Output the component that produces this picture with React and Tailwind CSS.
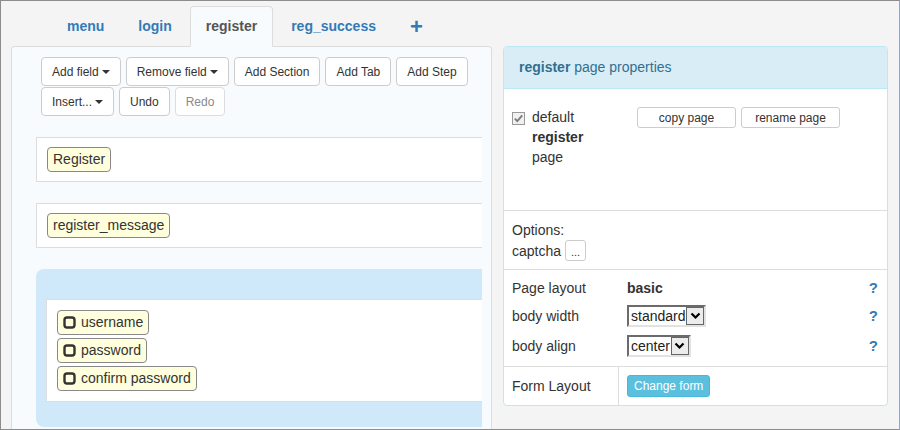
import React from 'react';

const tabs = ['menu', 'login', 'register', 'reg_success'];

const Caret = () => (
    <span className="inline-block w-0 h-0 ml-[3px] align-middle border-x-[4px] border-x-transparent border-t-[4px] border-t-[#333]" />
);

const ToolButton = ({ children, caret, disabled }) => (
    <button
        className={
            'h-[29px] px-[10px] rounded-[4px] border bg-white text-[12px] flex items-center ' +
            (disabled ? 'border-[#ddd] text-[#8a8a8a]' : 'border-[#ccc] text-[#333]')
        }
    >
        {children}
        {caret && <Caret />}
    </button>
);

const FieldIcon = () => (
    <svg width="13" height="13" viewBox="0 0 13 13" className="mr-[5px]">
        <rect x="1.5" y="1.5" width="10" height="10" rx="2.5" fill="none" stroke="#333" strokeWidth="2.4" />
    </svg>
);

const Chip = ({ label, icon }) => (
    <span className="inline-flex items-center h-[25px] px-[5px] border border-[#888] rounded-[4px] bg-[#ffffdd] text-[14px] text-[#333]">
        {icon && <FieldIcon />}
        {label}
    </span>
);

const FakeSelect = ({ value }) => (
    <div className="inline-flex items-center h-[22px] border-2 border-t-[#6b6b6b] border-l-[#6b6b6b] border-r-[#e2e2e2] border-b-[#e2e2e2] bg-white">
        <span className="pl-[2px] pr-[1px] text-[14px] text-[#222] leading-none">{value}</span>
        <span className="w-[18px] h-[18px] border border-[#666] bg-[#ececec] flex items-center justify-center">
            <svg width="11" height="8" viewBox="0 0 11 8">
                <path d="M1.5 1.5 L5.5 5.5 L9.5 1.5" fill="none" stroke="#000" strokeWidth="2.2" />
            </svg>
        </span>
    </div>
);

const Help = () => <span className="text-[15px] font-bold text-[#337ab7]">?</span>;

export default function App() {
    return (
        <div className="w-[900px] h-[430px] overflow-hidden flex flex-col border border-[#8c8c8c] border-r-[#8fa6c8] bg-[#f4f4f4] font-['Liberation_Sans',Arial,sans-serif] text-[#333]">
            {/* tabs */}
            <ul className="flex mt-[5px] ml-[10px] pl-[40px] relative z-10">
                {tabs.map((t) => (
                    <li
                        key={t}
                        className={
                            'h-[41px] -mb-px mr-[2px] px-[15px] flex items-center rounded-t-[4px] border text-[14px] font-bold ' +
                            (t === 'register'
                                ? 'border-[#ddd] border-b-transparent bg-[#f7fbfe] text-[#555]'
                                : 'border-transparent text-[#337ab7]')
                        }
                    >
                        {t}
                    </li>
                ))}
                <li className="h-[41px] -mb-px px-[16px] flex items-center text-[22px] font-bold text-[#337ab7]">+</li>
            </ul>

            <div className="flex flex-1 min-h-0 ml-[10px] gap-[11px]">
                {/* form editor */}
                <div className="w-[481px] overflow-hidden border border-b-0 border-[#ddd] rounded-t-[4px] bg-[#f7fbfe] pl-[24px] pt-[10px]">
                    <div className="ml-[5px] flex flex-col gap-[1px]">
                        <div className="flex gap-[5px]">
                            <ToolButton caret>Add field</ToolButton>
                            <ToolButton caret>Remove field</ToolButton>
                            <ToolButton>Add Section</ToolButton>
                            <ToolButton>Add Tab</ToolButton>
                            <ToolButton>Add Step</ToolButton>
                        </div>
                        <div className="flex gap-[5px]">
                            <ToolButton caret>Insert...</ToolButton>
                            <ToolButton>Undo</ToolButton>
                            <ToolButton disabled>Redo</ToolButton>
                        </div>
                    </div>

                    <div className="mt-[21px] w-[446px] border border-r-0 border-[#ddd] bg-white py-[9px] px-[10px]">
                        <Chip label="Register" />
                    </div>
                    <div className="mt-[21px] w-[446px] border border-r-0 border-[#ddd] bg-white py-[9px] px-[10px]">
                        <Chip label="register_message" />
                    </div>

                    <div className="mt-[21px] w-[446px] rounded-l-[8px] bg-[#cfe9fa] pt-[30px] pl-[10px] pb-[25px]">
                        <div className="border border-r-0 border-[#ddd] bg-white p-[10px] flex flex-col items-start gap-[3px]">
                            <Chip icon label="username" />
                            <Chip icon label="password" />
                            <Chip icon label="confirm password" />
                        </div>
                    </div>
                </div>

                {/* properties */}
                <div className="w-[385px] self-start border border-[#bce8f1] rounded-[4px] bg-white overflow-hidden text-[14px]">
                    <div className="h-[42px] border-b border-[#bce8f1] bg-[#d9edf7] px-[15px] flex items-center text-[#31708f]">
                        <span className="font-bold">register</span>&nbsp;page properties
                    </div>

                    <div className="h-[122px] border-b border-[#ddd] pt-[18px] pl-[8px] flex">
                        <div className="w-[125px] flex">
                            <svg width="13" height="13" viewBox="0 0 13 13" className="mt-[5px] mr-[7px] shrink-0">
                                <rect x="0.5" y="0.5" width="12" height="12" fill="#f0f0f0" stroke="#9a9a9a" />
                                <path d="M2.8 6.6 L5.3 9.2 L10.2 3.4" fill="none" stroke="#7b7b7b" strokeWidth="1.8" />
                            </svg>
                            <div className="leading-[20px]">
                                <div>default</div>
                                <div className="font-bold">register</div>
                                <div>page</div>
                            </div>
                        </div>
                        <div className="flex gap-[5px]">
                            <button className="w-[99px] h-[21px] border border-[#ccc] rounded-[3px] bg-white text-[12px] text-[#333]">copy page</button>
                            <button className="w-[99px] h-[21px] border border-[#ccc] rounded-[3px] bg-white text-[12px] text-[#333]">rename page</button>
                        </div>
                    </div>

                    <div className="h-[59px] border-b border-[#ddd] pt-[9px] pl-[8px] leading-[20px]">
                        <div>Options:</div>
                        <div className="flex items-center">
                            captcha
                            <button className="ml-[4px] w-[21px] h-[21px] border border-[#ccc] rounded-[3px] bg-white text-[11px] leading-none pt-[4px] text-[#333]">...</button>
                        </div>
                    </div>

                    <div className="h-[97px] border-b border-[#ddd] pt-[4px] pr-[9px]">
                        <div className="h-[28px] flex items-center">
                            <div className="w-[115px] pl-[8px]">Page layout</div>
                            <div className="flex-1 pl-[8px] font-bold">basic</div>
                            <Help />
                        </div>
                        <div className="h-[28px] flex items-center">
                            <div className="w-[115px] pl-[8px]">body width</div>
                            <div className="flex-1 pl-[8px]"><FakeSelect value="standard" /></div>
                            <Help />
                        </div>
                        <div className="h-[32px] flex items-center">
                            <div className="w-[115px] pl-[8px]">body align</div>
                            <div className="flex-1 pl-[8px]"><FakeSelect value="center" /></div>
                            <Help />
                        </div>
                    </div>

                    <div className="h-[38px] flex">
                        <div className="w-[115px] border-r border-[#ddd] pl-[8px] flex items-center">Form Layout</div>
                        <div className="pl-[8px] flex items-center">
                            <button className="h-[22px] px-[6px] border border-[#46b8da] rounded-[3px] bg-[#5bc0de] text-white text-[12px]">Change form</button>
                        </div>
                    </div>
                </div>
            </div>
        </div>
    );
}
